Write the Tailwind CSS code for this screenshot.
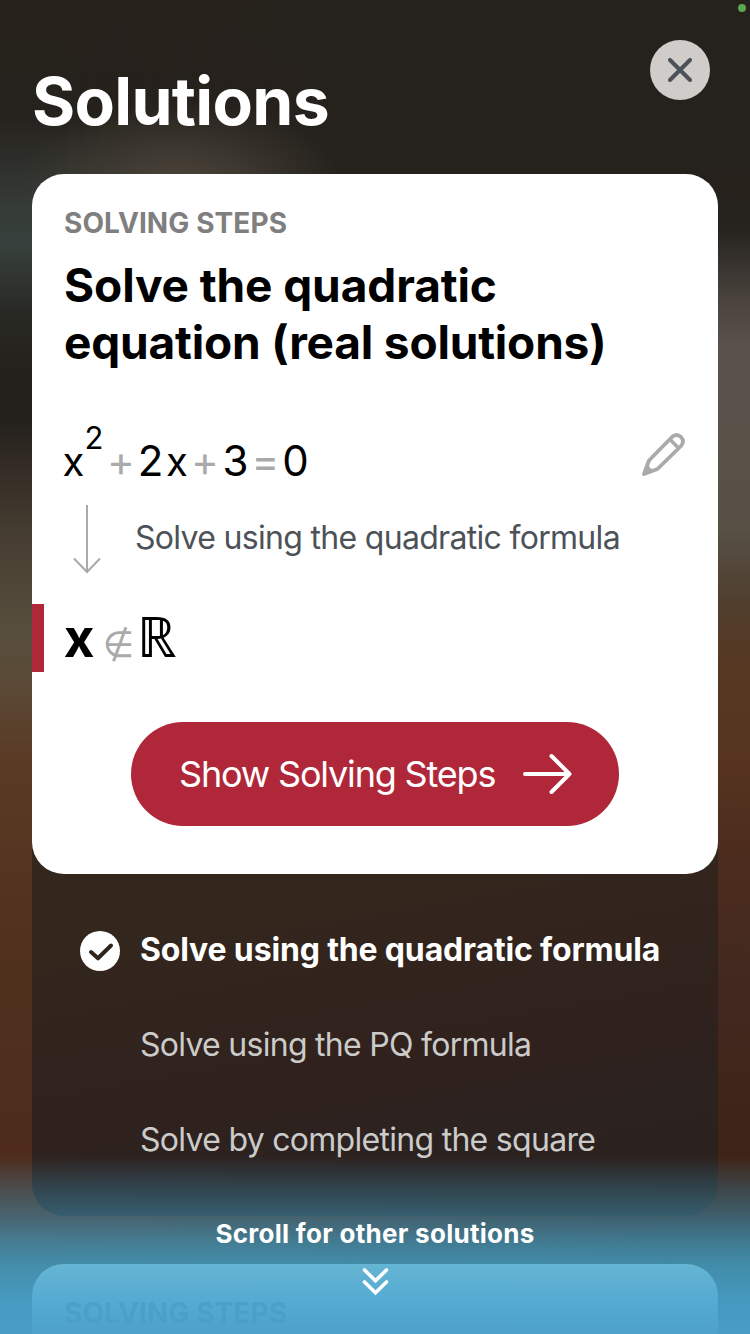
<!DOCTYPE html>
<html lang="en">
<head>
<meta charset="utf-8">
<meta name="viewport" content="width=device-width, initial-scale=1">
<title>Solutions</title>
<script src="https://cdn.jsdelivr.net/npm/@tailwindcss/browser@4"></script>
</head>
<body class="font-['Inter','Liberation_Sans',sans-serif]">
<div class="relative isolate flex h-[1334px] w-[750px] flex-col overflow-hidden bg-[#26221c]">

  <!-- blurred camera backdrop -->
  <div class="absolute inset-0 -z-10 bg-[linear-gradient(180deg,#27231c_0px,#25211c_110px,#363d39_215px,#37403c_245px,#292a25_310px,#24211c_370px,#24211c_420px,#2e2822_450px,#453c30_530px,#584e3d_632px,#5a4935_690px,#5a3a25_760px,#573622_830px,#4f301d_980px,#4f2c1d_1156px,#4f2b20_1334px)]"></div>
  <div class="absolute inset-0 -z-10 bg-[linear-gradient(180deg,#27221c_0px,#26211b_180px,#26231e_230px,#4a433e_300px,#59514a_345px,#5a524a_420px,#565045_530px,#503f2e_600px,#573822_670px,#563420_760px,#4e2d1e_840px,#42291f_980px,#3e2317_1156px,#3a2218_1334px)] [mask-image:linear-gradient(90deg,transparent_8%,black_90%)]"></div>
  <div class="absolute inset-x-0 top-0 -z-10 h-[174px] bg-[linear-gradient(90deg,transparent_20%,#25211c_50%)]"></div>
  <div class="absolute left-[20px] top-[100px] -z-10 h-[170px] w-[320px] bg-[radial-gradient(closest-side,#4b4339,transparent)]"></div>

  <!-- camera-in-use indicator -->
  <div class="absolute right-1 top-1 size-2 rounded-full bg-[#58a854]"></div>

  <header class="flex h-[174px] shrink-0 items-start justify-between pl-[32px] pr-[40px] pt-[40px]">
    <h1 class="mt-[21px] text-[66px] font-bold leading-[80px] tracking-[-0.7px] text-white">Solutions</h1>
    <button class="flex size-[60px] items-center justify-center rounded-full bg-[#cfccca]" aria-label="Close">
      <svg class="size-6" viewBox="0 0 24 24" fill="none" stroke="#4d5258" stroke-width="4" stroke-linecap="round"><path d="M2 2 22 22M22 2 2 22"/></svg>
    </button>
  </header>

  <section class="mx-8 shrink-0 rounded-[32px] bg-[linear-gradient(170deg,#33271e_0%,#33261d_68%,#30211d_82%,#2c2220_88%,#2a201b_100%)]">
    <div class="rounded-[32px] bg-white pb-12 pt-[29px]">
      <div class="h-10 px-8 text-[28px] font-bold leading-10 tracking-[0.1px] text-[#7f7f7f]">SOLVING STEPS</div>
      <h2 class="mt-[14px] px-8 text-[46px] font-bold leading-[57px] tracking-[-0.1px] text-black"><span class="block">Solve the quadratic</span><span class="block tracking-[-0.18px]">equation (real solutions)</span></h2>

      <div class="mt-[60px] flex h-[60px] items-center justify-between pl-8 pr-[30px]">
        <div class="flex items-baseline whitespace-nowrap text-center text-[42px] leading-[60px] text-black">
          <span class="flex w-[19px] justify-center text-[40px] leading-[60px]">x</span><sup class="relative -top-[27px] ml-px flex w-[20px] justify-center text-[31px] leading-[30px]">2</sup><span class="flex w-[34px] justify-center text-[#aaa]">+</span><span class="flex w-[25px] justify-center">2</span><span class="flex w-[28px] justify-center text-[40px]">x</span><span class="flex w-[28px] justify-center text-[#aaa]">+</span><span class="flex w-[33px] justify-center">3</span><span class="flex w-[27px] justify-center text-[#aaa]">=</span><span class="flex w-[33px] justify-center">0</span>
        </div>
        <svg class="-mt-[13px] h-[48px] w-[48px]" viewBox="0 0 48 48" fill="none" stroke="#aaa" stroke-width="3.8" stroke-linejoin="round"><path d="M4 43 9 29.500 32 6Q36.5 1.8 41 6Q45 10.5 41 15L17.500 38Z"/><path d="M30.5 9 38.5 17"/><path d="M4 43 7.500 34Q9 38.500 14 39.500Z" fill="#aaa" stroke-width="1.5"/></svg>
      </div>

      <div class="mt-[13px] flex h-[70px] items-center px-8">
        <svg class="ml-[9px] h-[70px] w-[28px]" viewBox="0 0 28 70" fill="none" stroke="#aaa" stroke-width="2"><path d="M14 1V68M1 54.500 14 68 27 54.500"/></svg>
        <div class="-mt-[2px] ml-[34px] whitespace-nowrap text-[32px] leading-10 tracking-[-0.69px] text-[#4d5258]">Solve using the quadratic formula</div>
      </div>

      <div class="mt-[30px] flex h-[68px]">
        <div class="w-3 bg-[#b02739]"></div>
        <div class="-mt-[3px] flex items-baseline whitespace-nowrap pl-[20px] leading-[68px] text-black">
          <span class="flex w-[30px] justify-center text-[53px] font-bold">x</span><span class="flex w-[49px] justify-center font-['DejaVu_Sans'] text-[36px] text-[#aaa]">∉</span><span class="flex w-[28px] justify-center font-['Noto_Sans'] text-[56px]">ℝ</span>
        </div>
      </div>

      <button class="mx-auto mt-[50px] flex h-[104px] w-[488px] items-center rounded-full bg-[#b02739] pl-[48px] text-white">
        <span class="whitespace-nowrap text-[36px] leading-[44px] tracking-[-1.18px]">Show Solving Steps</span>
        <svg class="ml-[28px] h-[44px] w-[50px] shrink-0" viewBox="0 0 50 44" fill="none" stroke="currentColor" stroke-width="4" stroke-linecap="round" stroke-linejoin="round"><path d="M2 22H46.500M28.500 4 46.500 22 28.500 40"/></svg>
      </button>
    </div>

    <ul class="pb-[29px] pl-12 pt-[28px] text-[32px] leading-10">
      <li class="flex h-[95px] items-center gap-[20px]">
        <svg class="mt-[3px] size-10 shrink-0" viewBox="0 0 40 40"><circle cx="20" cy="20" r="20" fill="#fff"/><path d="M11 21 18 27.300 31 14.500" fill="none" stroke="#30251c" stroke-width="4" stroke-linecap="round" stroke-linejoin="round"/></svg>
        <span class="whitespace-nowrap font-bold tracking-[-0.16px] text-white">Solve using the quadratic formula</span>
      </li>
      <li class="flex h-[95px] items-center whitespace-nowrap pl-[60px] tracking-[-0.72px] text-[#cbcbca]">Solve using the PQ formula</li>
      <li class="flex h-[95px] items-center whitespace-nowrap pl-[60px] tracking-[-0.71px] text-[#cbcbca]">Solve by completing the square</li>
    </ul>
  </section>

  <section class="mx-8 mt-12 h-[700px] shrink-0 rounded-[32px] bg-white pt-[29px]">
    <div class="h-10 px-8 text-[28px] font-bold leading-10 tracking-[0.1px] text-[#7f7f7f]">SOLVING STEPS</div>
  </section>

  <!-- scroll hint over the content -->
  <div class="absolute inset-x-0 bottom-0 flex h-[178px] flex-col items-center bg-[linear-gradient(180deg,rgba(65,160,200,0)_0px,rgba(65,160,200,0.26)_30px,rgba(65,160,200,0.48)_60px,rgba(65,162,200,0.7)_88px,rgba(66,164,202,0.82)_110px,rgba(70,163,206,0.92)_145px,rgba(73,159,202,0.98)_178px)] pt-[62px] text-white">
    <div class="whitespace-nowrap text-[26px] font-bold leading-8 tracking-[0.28px]">Scroll for other solutions</div>
    <svg class="mt-[17px] h-[30px] w-[28px]" viewBox="0 0 28 30" fill="none" stroke="currentColor" stroke-width="3.600" stroke-linecap="round"><path d="M3.500 3 14.500 13.700 25.500 3M3.500 15 14.500 25.700 25.500 15"/></svg>
  </div>
</div>
</body>
</html>
